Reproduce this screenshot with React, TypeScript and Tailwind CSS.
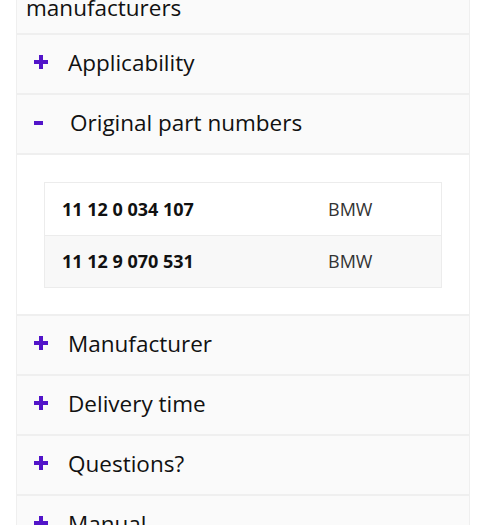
import { ReactNode } from "react";

const partNumbers = [
  { number: "11 12 0 034 107", brand: "BMW" },
  { number: "11 12 9 070 531", brand: "BMW" },
];

const collapsed = ["Manufacturer", "Delivery time", "Questions?", "Manual"];

function Toggle({ open }: { open: boolean }) {
  return (
    <span className="w-[35px] shrink-0 flex items-center">
      {open ? (
        <span className="ml-[1px] w-[9px] h-[4px] bg-[#5214c9]" />
      ) : (
        <svg width="16" height="16" viewBox="0 0 16 16" className="-mt-[3px]">
          <path d="M8 1v14M1 8h14" stroke="#5214c9" strokeWidth="4" />
        </svg>
      )}
    </span>
  );
}

function Header({ title, open = false }: { title: string; open?: boolean }) {
  return (
    <div className="h-[60px] flex items-center pl-[16px] pb-[2px] bg-[#fafafa] border-b-2 border-[#efefef]">
      <Toggle open={open} />
      <span className={`text-[22.5px] text-[#111] ${open ? "ml-[2px]" : ""}`}>{title}</span>
    </div>
  );
}

function Panel({ children }: { children: ReactNode }) {
  return <div className="bg-white border-b-2 border-[#efefef] p-[27px] pb-[26px]">{children}</div>;
}

export default function App() {
  return (
    <main
      className="h-[525px] overflow-hidden bg-white"
      style={{ fontFamily: '"Open Sans", "Liberation Sans", sans-serif' }}
    >
      <div className="ml-[16px] mr-[17px] border-x border-[#efefef]">
        {/* tail of the previous section title */}
        <div className="h-[35px] bg-[#fafafa] border-b-2 border-[#efefef] pl-[9px] overflow-hidden">
          <div className="-mt-[8px] text-[22.5px] leading-[32px] text-[#111]">manufacturers</div>
        </div>

        <Header title="Applicability" />
        <Header title="Original part numbers" open />

        <Panel>
          <div className="border border-[#ececec]">
            {partNumbers.map((p, i) => (
              <div
                key={p.number}
                className={`h-[52px] flex items-center ${
                  i > 0 ? "bg-[#f8f8f8] border-t border-[#ececec]" : "bg-white"
                }`}
              >
                <span className="w-[283px] pl-[17px] font-bold text-[18px] text-[#111]">
                  {p.number}
                </span>
                <span className="text-[18px] text-[#333]">{p.brand}</span>
              </div>
            ))}
          </div>
        </Panel>

        {collapsed.map((t) => (
          <Header key={t} title={t} />
        ))}
      </div>
    </main>
  );
}
